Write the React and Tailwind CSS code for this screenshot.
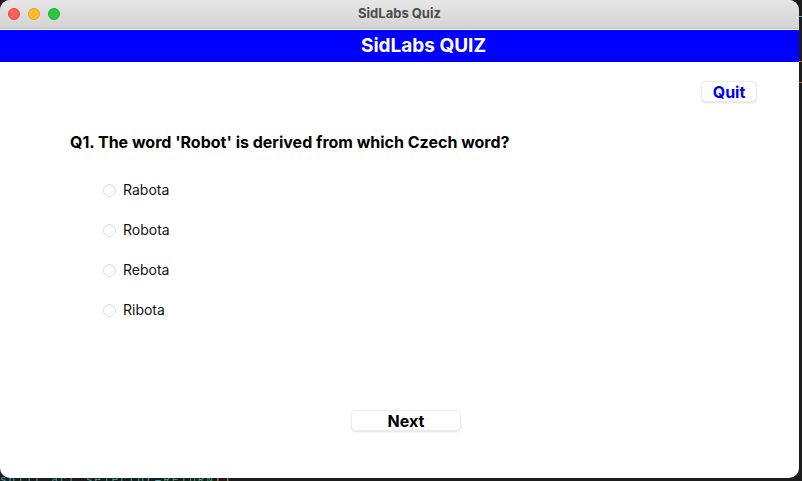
import { useState } from 'react'

const options = ['Rabota', 'Robota', 'Rebota', 'Ribota']

export default function App() {
  const [picked, setPicked] = useState(null)

  return (
    <div className="w-[802px] h-[481px] bg-[#1c1c1c] relative overflow-hidden" style={{ fontFamily: 'Inter, "Liberation Sans", sans-serif' }}>
      {/* terminal bits behind the window */}
      <div className="absolute left-0 bottom-[-5px] text-[11px] leading-none font-mono text-[#3aa0a8] tracking-[2px]">
        split_act_selector=<span className="text-[#2fa36b]">RETURN</span><span className="text-[#c9a227]">[]</span>
      </div>
      <div className="absolute right-0 top-[16px] w-[3px] h-px bg-[#4fb3c9]" />
      <div className="absolute right-0 top-[61px] w-[3px] h-px bg-[#c96a1e]" />
      <div className="absolute right-0 top-[82px] w-[3px] h-px bg-[#c96a1e]" />

      <div className="relative w-[799px] h-[478px] bg-white rounded-[10px] overflow-hidden flex flex-col">
        <div className="h-[29px] bg-gradient-to-b from-[#e6e6e6] to-[#d4d4d4] border-b border-[#c4c4c4] flex items-center relative shrink-0">
          <div className="flex gap-[8px] pl-[8px]">
            <span className="w-[12px] h-[12px] rounded-full bg-[#fe5f57] border border-[#e14640]" />
            <span className="w-[12px] h-[12px] rounded-full bg-[#febc2e] border border-[#dfa123]" />
            <span className="w-[12px] h-[12px] rounded-full bg-[#28c840] border border-[#1dad2b]" />
          </div>
          <div className="absolute inset-0 flex items-center justify-center text-[13px] font-bold text-[#4d4d4d]">SidLabs Quiz</div>
        </div>
        <div className="h-px bg-white shrink-0" />
        <div className="h-[32px] bg-[#0000ff] flex items-center justify-center shrink-0 pl-[48px]">
          <span className="text-white font-bold text-[19px]">SidLabs QUIZ</span>
        </div>

        <div className="flex-1 flex flex-col">
          <div className="flex justify-end pr-[42px] pt-[19px]">
            <button className="w-[56px] h-[21px] rounded-[5px] bg-white border border-[#ececec] shadow-[0_1px_2px_rgba(0,0,0,0.12)] text-[#0000f0] font-bold text-[16px] leading-none">
              Quit
            </button>
          </div>
          <div className="pl-[70px] pt-[30px] text-[16px] font-bold text-black leading-[20px]">
            Q1. The word 'Robot' is derived from which Czech word?
          </div>
          <div className="flex flex-col gap-[22px] pl-[103px] pt-[28px]">
            {options.map((o, i) => (
              <label key={o} className="flex items-center gap-[7px] h-[18px] cursor-pointer" onClick={() => setPicked(i)}>
                <span className="w-[13px] h-[13px] rounded-full border border-[#dcdcdc] bg-white shadow-[inset_0_1px_1px_rgba(0,0,0,0.05)] mt-[3px]" />
                <span className="text-[14px] text-[#111]">{o}</span>
              </label>
            ))}
          </div>
          <div className="flex justify-center pt-[92px] pl-[13px]">
            <button className="w-[110px] h-[21px] rounded-[5px] bg-white border border-[#ececec] shadow-[0_1px_2px_rgba(0,0,0,0.12)] text-black font-bold text-[16px] leading-none">
              Next
            </button>
          </div>
        </div>
      </div>
    </div>
  )
}
